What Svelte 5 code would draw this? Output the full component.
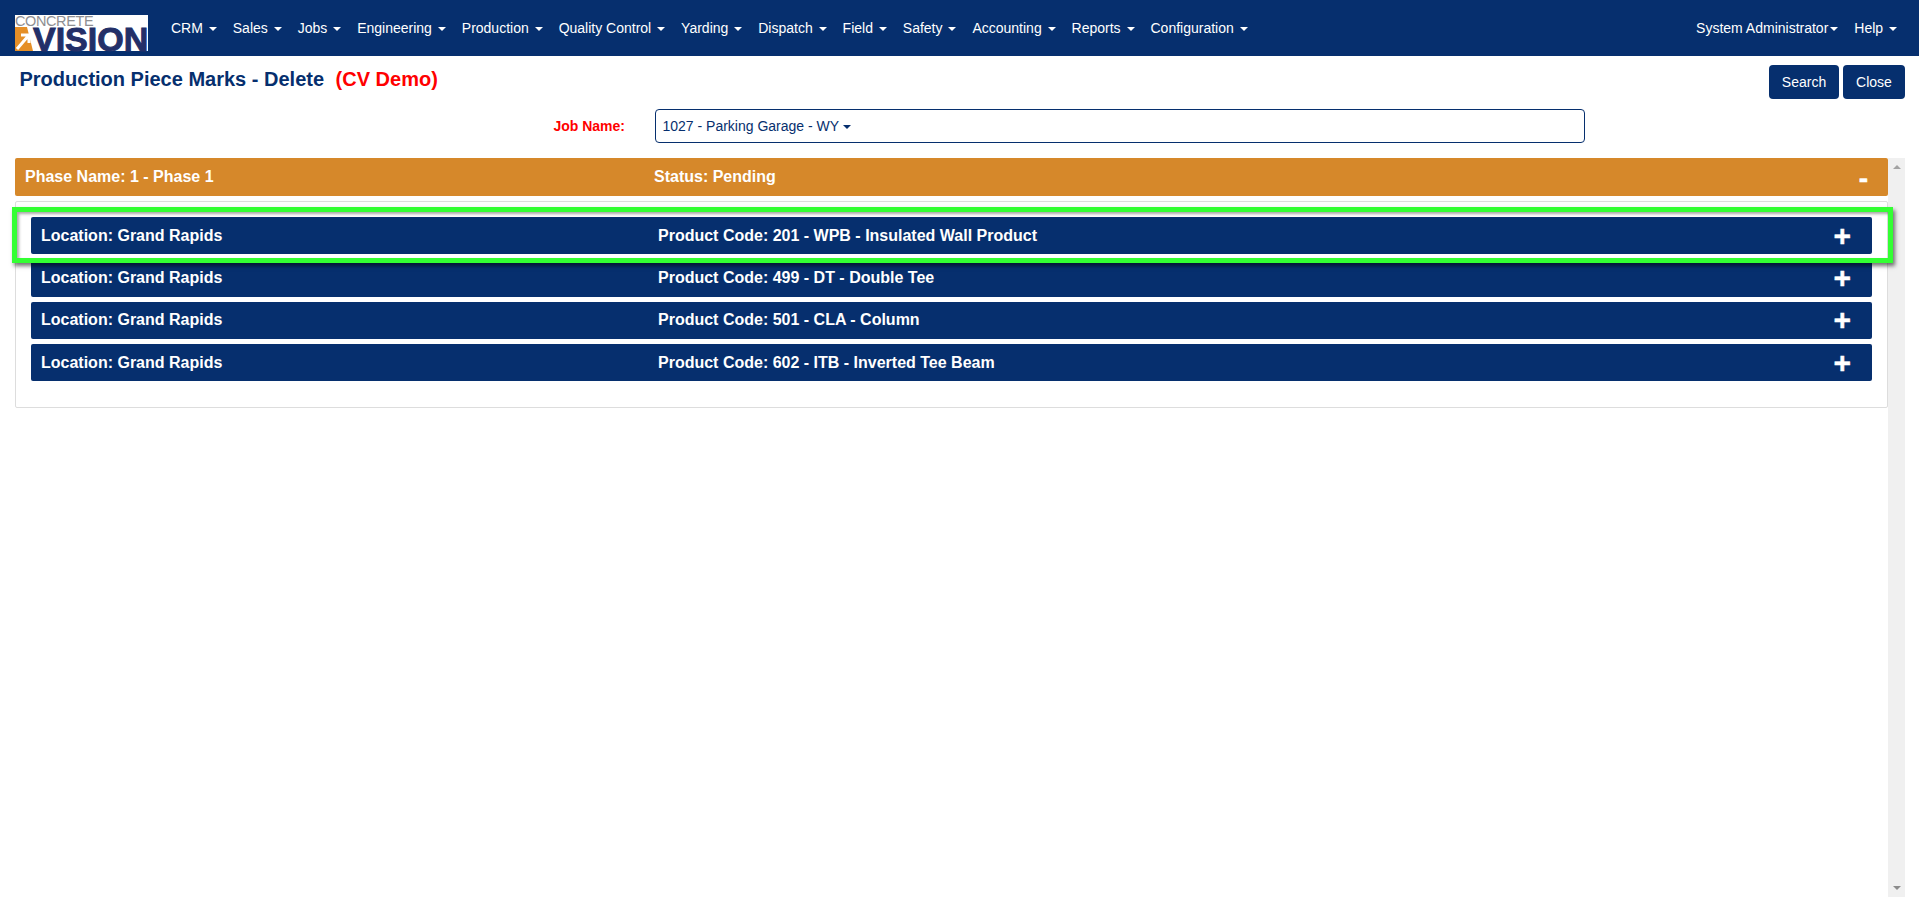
<script>
  const menus = ['CRM', 'Sales', 'Jobs', 'Engineering', 'Production', 'Quality Control', 'Yarding', 'Dispatch', 'Field', 'Safety', 'Accounting', 'Reports', 'Configuration']
  const rows = [
    { location: 'Grand Rapids', product: '201 - WPB - Insulated Wall Product' },
    { location: 'Grand Rapids', product: '499 - DT - Double Tee' },
    { location: 'Grand Rapids', product: '501 - CLA - Column' },
    { location: 'Grand Rapids', product: '602 - ITB - Inverted Tee Beam' }
  ]
</script>

<div class="page">
  <nav class="navbar">
    <div class="logo">
      <div class="logo-top">CONCRETE</div>
      <div class="logo-bottom">
        <svg class="logo-mark" viewBox="0 0 18 24" width="18" height="24">
          <path d="M0 0 H12 L18 24 H0 Z" fill="#e58f27" />
          <path d="M2 22 L14 8 M6 8 H14 V16" stroke="#fff" stroke-width="3" fill="none" />
        </svg>
        <span class="logo-word">VISION</span>
      </div>
    </div>
    <ul class="menu">
      {#each menus as m}
        <li>{m} <span class="caret"></span></li>
      {/each}
    </ul>
    <ul class="menu menu-right">
      <li class="tight">System Administrator<span class="caret"></span></li>
      <li>Help <span class="caret"></span></li>
    </ul>
  </nav>

  <header class="title-bar">
    <h1>Production Piece Marks - Delete <span class="demo">(CV Demo)</span></h1>
    <div class="actions">
      <button class="search">Search</button>
      <button class="close">Close</button>
    </div>
  </header>

  <div class="job-row">
    <label for="job">Job Name:</label>
    <div class="job-select" id="job">1027 - Parking Garage - WY <span class="caret"></span></div>
  </div>

  <div class="scroll-area">
    <div class="content">
      <div class="phase-head">
        <span class="col-a">Phase Name: 1 - Phase 1</span>
        <span class="col-b">Status: Pending</span>
        <span class="minus">-</span>
      </div>
      <div class="panel">
        {#each rows as r}
          <div class="row">
            <span class="row-a">Location: {r.location}</span>
            <span class="row-b">Product Code: {r.product}</span>
            <span class="plus">+</span>
          </div>
        {/each}
      </div>
    </div>
    <div class="scrollbar">
      <span class="arrow up"></span>
      <span class="arrow down"></span>
    </div>
  </div>

  <div class="highlight"></div>
</div>

<style>
  :global(body) {
    margin: 0;
    background: #fff;
  }
  .page {
    position: relative;
    width: 1919px;
    height: 917px;
    overflow: hidden;
    font-family: "Liberation Sans", Arial, sans-serif;
    font-size: 14px;
    color: #062f6e;
  }
  .navbar {
    display: flex;
    align-items: center;
    height: 56px;
    padding: 0 14px 0 15px;
    background: #062f6e;
    color: #fff;
    box-sizing: border-box;
  }
  .logo {
    width: 133px;
    height: 36px;
    margin-top: 10px;
    background: #fff;
  }
  .logo-top {
    height: 12px;
    font-size: 14.5px;
    line-height: 13px;
    color: #8f8f92;
    letter-spacing: -0.4px;
  }
  .logo-bottom {
    display: flex;
    height: 24px;
  }
  .logo-mark {
    flex: none;
  }
  .logo-word {
    font-size: 34px;
    line-height: 24px;
    font-weight: 700;
    color: #232f68;
    -webkit-text-stroke: 1px #232f68;
  }
  .menu {
    display: flex;
    margin: 0 0 0 15px;
    padding: 0;
    list-style: none;
    height: 56px;
    align-items: center;
  }
  .menu li {
    padding: 0 8px;
    white-space: nowrap;
  }
  .menu-right {
    margin-left: auto;
  }
  .menu-right li.tight {
    padding-right: 8px;
  }
  .caret {
    display: inline-block;
    width: 0;
    height: 0;
    margin-left: 2px;
    vertical-align: 2px;
    border-top: 4px solid;
    border-left: 4px solid transparent;
    border-right: 4px solid transparent;
  }
  .title-bar {
    display: flex;
    justify-content: space-between;
    padding: 9px 14px 0 19.5px;
    height: 44px;
    box-sizing: border-box;
  }
  h1 {
    margin: 3px 0 0;
    font-size: 20px;
    line-height: 23px;
    font-weight: 700;
    color: #062f6e;
    white-space: pre-wrap;
  }
  .demo {
    margin-left: 6px;
    color: #ff0000;
  }
  .actions {
    display: flex;
    gap: 4px;
  }
  button {
    height: 34px;
    border: 0;
    border-radius: 4px;
    background: #062f6e;
    color: #fff;
    font: 14px "Liberation Sans", Arial, sans-serif;
  }
  .search {
    width: 70px;
  }
  .close {
    width: 62px;
  }
  .job-row {
    display: flex;
    align-items: center;
    height: 34px;
    margin-top: 9px;
  }
  label {
    width: 625px;
    text-align: right;
    font-weight: 700;
    color: #ff0000;
    margin-right: 30px;
  }
  .job-select {
    width: 930px;
    height: 34px;
    line-height: 32px;
    padding-left: 6.5px;
    border: 1px solid #062f6e;
    border-radius: 4px;
    box-sizing: border-box;
  }
  .job-select .caret {
    margin-left: 0;
  }
  .scroll-area {
    display: flex;
    height: 739px;
    margin: 15px 14px 0 15px;
  }
  .content {
    flex: 1;
    min-width: 0;
  }
  .phase-head {
    display: flex;
    align-items: center;
    height: 38px;
    padding: 0 10px;
    border-radius: 2px;
    background: #d6882a;
    color: #fff;
    font-size: 16px;
    font-weight: 700;
  }
  .col-a {
    width: 629px;
  }
  .minus {
    margin-left: auto;
    margin-right: 10px;
    font-size: 28px;
    line-height: 28px;
    padding-top: 3px;
    -webkit-text-stroke: 0.5px #fff;
  }
  .panel {
    margin-top: 5px;
    height: 207px;
    padding: 15px 15px 0;
    border: 1px solid #ddd;
    border-radius: 2px;
    box-sizing: border-box;
  }
  .row {
    display: flex;
    align-items: center;
    height: 37.3px;
    margin-bottom: 5px;
    padding: 0 21px 0 10px;
    border-radius: 2px;
    background: #062f6e;
    color: #fff;
    font-size: 16px;
    font-weight: 700;
  }
  .row-a {
    width: 617px;
  }
  .plus {
    margin-left: auto;
    font-size: 30px;
    line-height: 28px;
    -webkit-text-stroke: 0.4px #fff;
  }
  .scrollbar {
    display: flex;
    flex-direction: column;
    justify-content: space-between;
    align-items: center;
    width: 17px;
    flex: none;
    padding: 7px 0;
    box-sizing: border-box;
    background: #f0f0f0;
  }
  .arrow {
    width: 0;
    height: 0;
    border-left: 4px solid transparent;
    border-right: 4px solid transparent;
  }
  .up {
    border-bottom: 4px solid #a3a3a3;
  }
  .down {
    border-top: 4px solid #8c8c8c;
  }
  .highlight {
    position: absolute;
    left: 12px;
    top: 207px;
    width: 1881px;
    height: 56px;
    border: 5px solid #33ff33;
    box-sizing: border-box;
    box-shadow: 2px 3px 4px rgba(0, 0, 0, 0.55), inset 2px 2px 3px rgba(0, 0, 0, 0.35);
  }
</style>
